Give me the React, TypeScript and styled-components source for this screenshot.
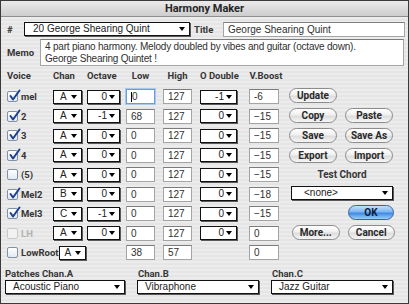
import React from "react"
import styled, { createGlobalStyle, css } from "styled-components"

const GlobalStyle = createGlobalStyle`
  html, body {
    margin: 0;
    padding: 0;
    background: #ffffff;
  }
  body {
    font-family: "Liberation Sans", Arial, sans-serif;
    font-size: 10px;
    color: #1c1c1c;
  }
`

const labelFont = css`
  font-family: Roboto, "Liberation Sans", Arial, sans-serif;
  font-weight: 700;
  font-size: 9.5px;
`

const Window = styled.div`
  width: 409px;
  height: 304px;
  box-sizing: border-box;
  border: 1px solid #3a3a3a;
  background: repeating-linear-gradient(180deg, #ececec 0 2px, #e5e5e5 2px 4px);
  display: flex;
  flex-direction: column;
  overflow: hidden;
`

const TitleBar = styled.div`
  height: 16px;
  flex-shrink: 0;
  box-sizing: border-box;
  border-bottom: 1px solid #8e8e8e;
  background: linear-gradient(180deg, #ebebeb, #cdcdcd);
  display: flex;
  align-items: center;
  justify-content: center;
  ${labelFont}
  font-size: 11px;
  color: #262626;
`

const Row = styled.div<{ $top: number; $height: number }>`
  display: flex;
  align-items: center;
  margin-top: ${p => p.$top}px;
  padding-left: 6px;
  height: ${p => p.$height}px;
`

const Label = styled.span<{ $width?: number; $muted?: boolean; $gap?: number }>`
  ${labelFont}
  color: ${p => (p.$muted ? "#b4b4b4" : "#363636")};
  white-space: nowrap;
  margin-left: ${p => p.$gap ?? 0}px;
  ${p => p.$width !== undefined && css`width: ${p.$width}px; flex-shrink: 0;`}
`

const Field = styled.div<{ $width: number; $focus?: boolean }>`
  width: ${p => p.$width}px;
  height: 15px;
  box-sizing: border-box;
  border: 1px solid #a4a4a4;
  border-top-color: #7c7c7c;
  background: #ffffff;
  padding-left: 4px;
  line-height: 13px;
  color: #303030;
  white-space: nowrap;
  overflow: hidden;
  display: flex;
  align-items: center;
  ${p =>
    p.$focus &&
    css`
      border-color: #6d9bd6;
      box-shadow: 0 0 0 1px #a9c8ee;
    `}
`

const Caret = styled.span`
  display: inline-block;
  width: 1px;
  height: 10px;
  background: #000;
`

const MemoBox = styled.div`
  width: 364px;
  height: 27px;
  box-sizing: border-box;
  border: 1px solid #a4a4a4;
  border-top-color: #7c7c7c;
  background: #ffffff;
  padding: 1px 4px;
  line-height: 12px;
  letter-spacing: -0.2px;
  color: #303030;
  white-space: nowrap;
  overflow: hidden;
`

const SelectBox = styled.div<{ $width: number; $align?: "left" | "right"; $pad?: number }>`
  position: relative;
  width: ${p => p.$width}px;
  height: 14px;
  box-sizing: border-box;
  border: 1px solid #111;
  box-shadow: 1px 1px 0 #5a5a5a;
  background: #ffffff;
  display: flex;
  align-items: center;
  justify-content: ${p => (p.$align === "right" ? "flex-end" : "flex-start")};
  padding-left: ${p => p.$pad ?? 5}px;
  padding-right: 12px;
  line-height: 12px;
  color: #222;
  white-space: nowrap;
  flex-shrink: 0;

  &::after {
    content: "";
    position: absolute;
    right: 4px;
    top: 4px;
    border-left: 3px solid transparent;
    border-right: 3px solid transparent;
    border-top: 4px solid #000;
  }
`

const Grid = styled.div`
  display: grid;
  grid-template-columns: 46px 34px 39px 37px 37px 49px 30px;
  grid-auto-rows: 15px;
  row-gap: 4.5px;
  align-items: center;
`

const HeaderGrid = styled(Grid)`
  grid-auto-rows: 11px;
  margin-top: 4px;
  padding-left: 6px;
`

const HeadCell = styled.span<{ $width?: number }>`
  ${labelFont}
  color: #363636;
  white-space: nowrap;
  ${p =>
    p.$width !== undefined &&
    css`
      width: ${p.$width}px;
      text-align: center;
    `}
`

const Main = styled.div`
  display: flex;
  margin-top: 8px;
  padding-left: 6px;
`

const VoiceCell = styled.div`
  display: flex;
  align-items: center;
  gap: 3px;
  white-space: nowrap;
`

const LowRootCell = styled.div`
  grid-column: 1 / 3;
  display: flex;
  align-items: center;
  justify-content: space-between;
  padding-right: 3px;
`

const Box = styled.span<{ $disabled?: boolean }>`
  width: 11px;
  height: 11px;
  box-sizing: border-box;
  border: 1px solid ${p => (p.$disabled ? "#c9c9c9" : "#8391a8")};
  border-radius: 2px;
  background: ${p => (p.$disabled ? "#f2f2f2" : "linear-gradient(180deg, #ffffff, #e3e9f2)")};
  position: relative;
  flex-shrink: 0;

  svg {
    position: absolute;
    left: 0;
    top: -3px;
  }
`

const Panel = styled.div`
  display: flex;
  flex-direction: column;
  gap: 5px;
  width: 106px;
  margin-left: 10px;
  margin-top: -1.5px;
`

const PanelRow = styled.div<{ $indent?: number }>`
  display: flex;
  gap: 8px;
  padding-left: ${p => p.$indent ?? 0}px;
`

const Button = styled.button<{ $width?: number; $primary?: boolean }>`
  width: ${p => p.$width ?? 48}px;
  height: 15px;
  box-sizing: border-box;
  padding: 0;
  border: 1px solid #8c8c8c;
  border-radius: 8px;
  background: linear-gradient(180deg, #ffffff 0%, #f0f0f0 45%, #dddddd 55%, #f6f6f6 100%);
  ${labelFont}
  font-size: 10px;
  color: #2a2a2a;
  line-height: 13px;
  ${p =>
    p.$primary &&
    css`
      border-color: #3a64a0;
      background: linear-gradient(180deg, #c6e0fa 0%, #7db5ef 45%, #3f8ae3 55%, #9ccdf7 100%);
      color: #0c1c38;
    `}
`

const PanelCaption = styled.div`
  height: 13px;
  line-height: 13px;
  text-align: center;
  ${labelFont}
  font-size: 10px;
  color: #363636;
`

const BottomLabels = styled.div`
  display: grid;
  grid-template-columns: 133px 134px 122px;
  margin-top: 7px;
  padding-left: 4px;
  height: 12px;
  align-items: center;
`

const BottomSelects = styled.div`
  display: flex;
  gap: 12px;
  margin-top: 1px;
  padding-left: 4px;
`

const Check: React.FC = () => (
  <svg width="13" height="13" viewBox="0 0 13 13">
    <path d="M2.5 7 L5 10.5 L11.5 1.5" fill="none" stroke="#1d3f8f" strokeWidth="2" strokeLinejoin="round" strokeLinecap="round" />
  </svg>
)

type Voice = {
  label: string
  checked: boolean
  disabled?: boolean
  chan: string
  oct: string
  low: string
  high: string
  od: string
  vb: string
  focus?: boolean
}

const voices: Voice[] = [
  { label: "mel", checked: true, chan: "A", oct: "0", low: "0", high: "127", od: "-1", vb: "-6", focus: true },
  { label: "2", checked: true, chan: "A", oct: "-1", low: "68", high: "127", od: "0", vb: "\u221215" },
  { label: "3", checked: true, chan: "A", oct: "0", low: "0", high: "127", od: "0", vb: "\u221215" },
  { label: "4", checked: true, chan: "A", oct: "0", low: "0", high: "127", od: "0", vb: "\u221215" },
  { label: "(5)", checked: false, chan: "A", oct: "0", low: "0", high: "127", od: "0", vb: "\u221215" },
  { label: "Mel2", checked: true, chan: "B", oct: "0", low: "0", high: "127", od: "0", vb: "\u221218" },
  { label: "Mel3", checked: true, chan: "C", oct: "-1", low: "0", high: "127", od: "0", vb: "\u221215" },
  { label: "LH", checked: false, disabled: true, chan: "A", oct: "0", low: "0", high: "127", od: "0", vb: "0" },
]

const CheckItem: React.FC<{ label: string; checked: boolean; disabled?: boolean }> = ({ label, checked, disabled }) => (
  <VoiceCell>
    <Box $disabled={disabled}>{checked && <Check />}</Box>
    <Label $muted={disabled}>{label}</Label>
  </VoiceCell>
)

const App: React.FC = () => {
  return (
    <>
      <GlobalStyle />
      <Window>
        <TitleBar>Harmony Maker</TitleBar>

        <Row $top={4} $height={16}>
          <Label $width={17}>#</Label>
          <SelectBox $width={166} $pad={8}>20 George Shearing Quint</SelectBox>
          <Label $width={29} $gap={4}>Title</Label>
          <Field $width={182}>George Shearing Quint</Field>
        </Row>

        <Row $top={2} $height={27}>
          <Label $width={33}>Memo</Label>
          <MemoBox>
            4 part piano harmony. Melody doubled by vibes and guitar (octave down).
            <br />
            George Shearing Quintet !
          </MemoBox>
        </Row>

        <HeaderGrid>
          <HeadCell>Voice</HeadCell>
          <HeadCell>Chan</HeadCell>
          <HeadCell>Octave</HeadCell>
          <HeadCell $width={29}>Low</HeadCell>
          <HeadCell $width={29}>High</HeadCell>
          <HeadCell $width={37}>O Double</HeadCell>
          <HeadCell $width={34}>V.Boost</HeadCell>
        </HeaderGrid>

        <Main>
          <Grid>
            {voices.map(v => (
              <React.Fragment key={v.label}>
                <CheckItem label={v.label} checked={v.checked} disabled={v.disabled} />
                <SelectBox $width={29} $pad={6}>{v.chan}</SelectBox>
                <SelectBox $width={33} $align="right">{v.oct}</SelectBox>
                <Field $width={29} $focus={v.focus}>
                  {v.focus && <Caret />}
                  {v.low}
                </Field>
                <Field $width={29}>{v.high}</Field>
                <SelectBox $width={37} $align="right">{v.od}</SelectBox>
                <Field $width={30}>{v.vb}</Field>
              </React.Fragment>
            ))}
            <LowRootCell>
              <CheckItem label="LowRoot" checked={false} />
              <SelectBox $width={27} $pad={5}>A</SelectBox>
            </LowRootCell>
            <span />
            <Field $width={29}>38</Field>
            <Field $width={29}>57</Field>
            <span />
            <Field $width={30}>0</Field>
          </Grid>

          <Panel>
            <PanelRow>
              <Button>Update</Button>
            </PanelRow>
            <PanelRow>
              <Button>Copy</Button>
              <Button>Paste</Button>
            </PanelRow>
            <PanelRow>
              <Button>Save</Button>
              <Button>Save As</Button>
            </PanelRow>
            <PanelRow>
              <Button>Export</Button>
              <Button>Import</Button>
            </PanelRow>
            <PanelCaption>Test Chord</PanelCaption>
            <PanelRow $indent={2}>
              <SelectBox $width={102} $pad={12}>&lt;none&gt;</SelectBox>
            </PanelRow>
            <PanelRow $indent={59}>
              <Button $primary $width={46}>OK</Button>
            </PanelRow>
            <PanelRow $indent={3}>
              <Button>More...</Button>
              <Button>Cancel</Button>
            </PanelRow>
          </Panel>
        </Main>

        <BottomLabels>
          <Label>Patches Chan.A</Label>
          <Label>Chan.B</Label>
          <Label>Chan.C</Label>
        </BottomLabels>
        <BottomSelects>
          <SelectBox $width={120} $pad={7}>Acoustic Piano</SelectBox>
          <SelectBox $width={122} $pad={7}>Vibraphone</SelectBox>
          <SelectBox $width={122} $pad={7}>Jazz Guitar</SelectBox>
        </BottomSelects>
      </Window>
    </>
  )
}

export default App
